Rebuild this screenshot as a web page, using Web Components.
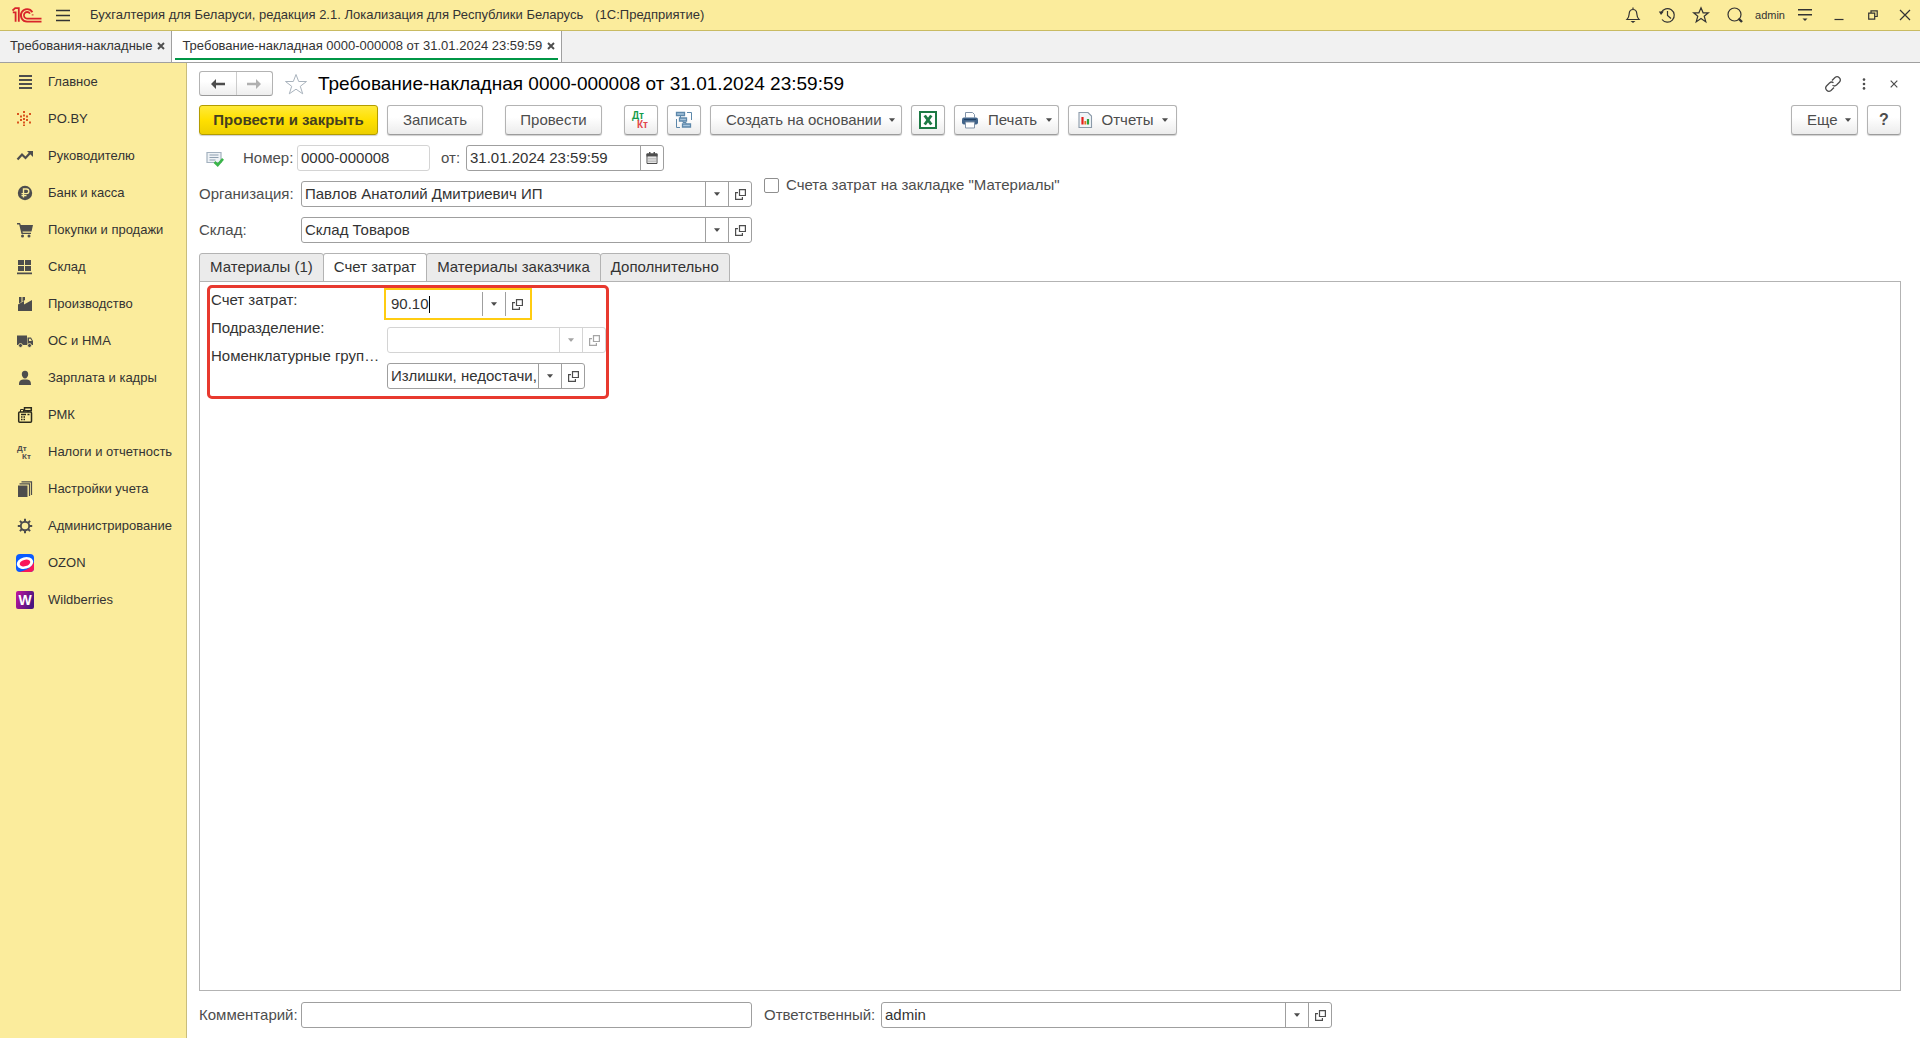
<!DOCTYPE html>
<html lang="ru">
<head>
<meta charset="utf-8">
<title>Требование-накладная 0000-000008 от 31.01.2024 23:59:59</title>
<style>
  html, body { margin: 0; }
  body {
    font-family: "Liberation Sans", Arial, sans-serif;
    font-size: 15px; line-height: 18px; color: #4d4d4d; background: #fff;
    --yellow: #fbec9c; --line: #b3b3b3; --field: #9f9f9f;
  }
</style>
</head>
<body>
<accounting-app></accounting-app>
<script>
const BASE = `
  *, *::before { box-sizing: border-box; }
  button, input { font: inherit; color: inherit; margin: 0; }
  button { background: none; border: 0; padding: 0; display: flex; align-items: center; justify-content: center; }
  input { min-width: 0; }
  a { color: inherit; text-decoration: none; }
`;
const FIELD = `
  .field { display: flex; height: 26px; border: 1px solid var(--field); border-radius: 3px; background: #fff; color: #333; }
  .field input { flex: 1; width: 0; border: 0; padding: 0 0 0 3px; background: transparent; outline: 0; }
  .field button { width: 23px; flex: none; border-left: 1px solid var(--field); }
`;
const ICONS = {
  logo: [30, 16, `<g fill="none" stroke="#d8242a" stroke-width="1.8"><path d="M.5 3.6 3.2 1.2h3.6v13.6M.8 5.4h2.8v9.4"/><path d="M20.4 5.2A6.2 6.2 0 1 0 15 14.6h14.5"/><path d="M18 6.6A3.3 3.3 0 1 0 15 11.6h14.5"/><path d="M20.6 7.4v1"/></g>`],
  menu: [16, 14, `<path d="M1 2.5h14M1 7.5h14M1 12.5h14" stroke="#333" stroke-width="1.3"/>`],
  bell: [16, 18, `<path d="M2 13.5h12c-2-2-2-3.500-2.200-6C11.600 5 10 3.500 8 3.500S4.400 5 4.200 7.500C4 10 4 11.500 2 13.500zM8 1.500v2" fill="none" stroke="#333" stroke-width="1.200"/><path d="M5.500 15h5L8 17z" fill="#333"/>`],
  history: [18, 18, `<g fill="none" stroke="#333" stroke-width="1.200"><path d="M3.300 6.500A6.800 6.800 0 1 1 4 13.500M9.500 5v4.500l3.500 3"/></g><path d="M.8 5.500h5L3 9z" fill="#333"/>`],
  star: [18, 18, `<path d="M9 1.800l2.100 5h5.300l-4.200 3.400 1.600 5.700L9 12.600l-4.800 3.300 1.600-5.700L1.600 6.800h5.300z" fill="none" stroke="#333" stroke-width="1.200"/>`],
  search: [18, 18, `<circle cx="8.500" cy="8.500" r="6.500" fill="none" stroke="#333" stroke-width="1.200"/><path d="M12.500 12.500l3.500 3.500" stroke="#333" stroke-width="2.400"/>`],
  usermenu: [16, 14, `<path d="M1 1.700h14M1 6.700h14" stroke="#333" stroke-width="1.400"/><path d="M5.500 10.500h5L8 13z" fill="#333"/>`],
  min: [10, 14, `<path d="M.5 11.500h9" stroke="#333" stroke-width="1.200"/>`],
  restore: [10, 10, `<path d="M.7 3.200h6v6h-6zM3 3V.8h6.200v5.700H7" fill="none" stroke="#333" stroke-width="1.200"/>`],
  close: [12, 12, `<path d="M1 1l10 10M11 1L1 11" stroke="#333" stroke-width="1.200"/>`],
  closesm: [8, 8, `<path d="M.7.7l6.600 6.600M7.300.7L.7 7.300" stroke="#4d4d4d" stroke-width="1.200"/>`],
  closetab: [8, 8, `<path d="M1 1l6 6M7 1L1 7" stroke="#4d4d4d" stroke-width="1.900"/>`],
  link: [18, 18, `<g fill="none" stroke="#4d4d4d" stroke-width="1.300"><path d="M8 5.500l3-3a3.200 3.200 0 0 1 4.500 4.500l-3 3a3.200 3.200 0 0 1-4 .3"/><path d="M10 12.500l-3 3A3.200 3.200 0 0 1 2.500 11l3-3a3.200 3.200 0 0 1 4-.3"/></g>`],
  dots: [4, 12, `<g fill="#4d4d4d"><circle cx="2" cy="1.600" r="1.300"/><circle cx="2" cy="6" r="1.300"/><circle cx="2" cy="10.400" r="1.300"/></g>`],
  back: [14, 10, `<path d="M0 5l5-5v3.800h9v2.400H5V10z" fill="#4d4d4d"/>`],
  fwd: [14, 10, `<path d="M14 5L9 0v3.800H0v2.400h9V10z" fill="#b0b0b0"/>`],
  bigstar: [24, 22, `<path d="M12 1.500l2.700 7H22.500l-6.200 4.800 2.400 7.500L12 16.200l-6.700 4.600 2.400-7.500L1.500 8.500h7.800z" fill="none" stroke="#a9b3bd" stroke-width="1"/>`],
  drop: [6, 4, `<path d="M0 .3h6L3.500 3.600h-1z" fill="#4d4d4d"/>`],
  open: [11, 11, `<path d="M4.500.6h5.900v5.900H4.500zM3 3.600H.6v6.800h6.800V8" fill="none" stroke="#4d4d4d" stroke-width="1.200"/>`],
  calendar: [12, 12, `<path d="M1 2h10v9.500H1z" fill="#fff" stroke="#4d4d4d"/><path d="M.5 1.500h11v3H.5zM3 0h1.500v2H3zM7.500 0H9v2H7.500z" fill="#4d4d4d"/><path d="M2.500 6.200h7M2.500 8h7M2.500 9.800h7" stroke="#4d4d4d" stroke-width="1" stroke-dasharray="1 1"/>`],
  doc: [18, 18, `<path d="M1 3.500h14v10H1z" fill="#eef2f6" stroke="#a3b1bf" stroke-width="1.200"/><path d="M3.500 6h9M3.500 8.500h9M3.500 11h6" stroke="#8fa0b0"/><path d="M8.500 13l3.200 3L17 9.800" fill="none" stroke="#3bb54a" stroke-width="2.600"/>`],
  dtkt: [20, 20, `<text x="1" y="9" font-size="10" font-weight="bold" fill="#159c4b">Дт</text><text x="6" y="18" font-size="10" font-weight="bold" fill="#e2474b">Кт</text>`],
  tree: [18, 18, `<g fill="#a9c6dd" stroke="#5d88ab" stroke-width="1.300"><path d="M1.500 1.500h8v3h-8zM4.500 7h7v3h-7zM7.500 13h8v3h-8z"/></g><path d="M5.500 4.500V7M8 10v1.500h3V13M12 1.500h4.500V9M1.500 8v8.500H5" fill="none" stroke="#5d88ab"/>`],
  excel: [18, 18, `<path d="M1 1h16v16H1z" fill="#fff" stroke="#1d7a45" stroke-width="2"/><path d="M5.700 4.500l6.600 9M12.300 4.500l-6.600 9" stroke="#1d7a45" stroke-width="2.900"/>`],
  print: [18, 18, `<path d="M4.500 6.500V1.500h7l2 2v3" fill="#fff" stroke="#8193a8"/><rect x="1" y="6.500" width="16" height="7" rx="2" fill="#41648a"/><path d="M3 8.500h12" stroke="#1f3f63"/><path d="M4.500 11h9v6h-9z" fill="#fff" stroke="#8193a8"/>`],
  report: [16, 18, `<path d="M2 1.500h9l3.500 3.500v11.500H2z" fill="#f1f5f8" stroke="#8b9aa9" stroke-width="1.100"/><path d="M5.500 6v7.500" stroke="#e4201c" stroke-width="2.200"/><path d="M8.300 10v3.500" stroke="#e4701c" stroke-width="1.800"/><path d="M11 8v5.500" stroke="#2aa23a" stroke-width="2.200"/>`],
  n_main: [18, 18, `<path d="M3 3h13M3 7h13M3 11h13M3 15h13" stroke="#4d4d4d" stroke-width="2"/>`],
  n_po: [18, 18, `<path d="M7 1h2v2H7zM7 4.500h2v2H7zM7 8h2v2H7zM7 11.500h2v2H7zM7 14.500h2V16H7zM1 3h2v2H1zM13 3h2v2h-2zM4 5.500h2v2H4zM10 5.500h2v2h-2zM4 9h2v2H4zM10 9h2v2h-2zM1 11.500h2v2H1zM13 11.500h2v2h-2z" fill="#d9541e"/>`],
  n_chart: [18, 18, `<path d="M1.500 12.500L6 7.500l3.500 3.500L15 5" fill="none" stroke="#4d4d4d" stroke-width="2.200"/><path d="M11 4h6v6z" fill="#4d4d4d"/>`],
  n_rub: [18, 18, `<circle cx="9" cy="9" r="7.200" fill="#4d4d4d"/><path d="M7.500 13.500V5h3a2.300 2.300 0 0 1 0 4.600H5.500M5.500 11.600h5" fill="none" stroke="#fbec9c" stroke-width="1.400"/>`],
  n_cart: [18, 18, `<path d="M1 2h3l.8 2H17l-1.500 6.500H6.500l.3 1.200H15V13H5.500L3.200 3.500H1z" fill="#4d4d4d"/><circle cx="6.500" cy="15" r="1.500" fill="#4d4d4d"/><circle cx="13" cy="15" r="1.500" fill="#4d4d4d"/>`],
  n_store: [18, 18, `<path d="M2 2h6v5H2zM9 2h6v5H9zM2 8h6v5H2zM9 8h6v5H9zM1 14.500h15v1.800H1z" fill="#4d4d4d"/>`],
  n_fact: [18, 18, `<path d="M2 16V9.500L8 6v3.500L16 5v11z" fill="#4d4d4d"/><path d="M3 2h2.500v5L3 8.500zM6.500 2H9v3L6.500 6.500z" fill="#4d4d4d"/>`],
  n_truck: [18, 18, `<path d="M1 3.500h10V13H1zM11.500 5.500H15L17 9v4h-5.500z" fill="#4d4d4d"/><path d="M13 6.800h1.500L15.800 9H13z" fill="#fbec9c"/><circle cx="4.500" cy="13.500" r="2" fill="#4d4d4d" stroke="#fbec9c" stroke-width=".8"/><circle cx="13.500" cy="13.500" r="2" fill="#4d4d4d" stroke="#fbec9c" stroke-width=".8"/>`],
  n_user: [18, 18, `<path d="M9 1.800c2.200 0 3.200 1.500 3.200 3.400S10.800 9.500 9 9.500 5.800 7.100 5.800 5.200 6.800 1.800 9 1.800zM3 16c0-4 1-5 4-5.500h4c3 .5 4 1.500 4 5.500z" fill="#4d4d4d"/>`],
  n_pos: [18, 18, `<g fill="none" stroke="#2b2a1c" stroke-width="1.500"><rect x="2.700" y="6" width="12.800" height="10.300" rx="1"/><path d="M8.500 1.700h6.800v3H8.500zM12 4.700V6" /></g><path d="M4.500 6V3.500h3V6" fill="none" stroke="#2b2a1c"/><path d="M5 8.500h5M5 11h1.500M7.500 11H9M5 13.500h1.500M7.500 13.500H9M11.500 8.500h2" stroke="#2b2a1c" stroke-width="1.400"/>`],
  n_dtkt: [18, 18, `<text x="1" y="8" font-size="8" font-weight="bold" fill="#4d4d4d">Дт</text><text x="6" y="16" font-size="8" font-weight="bold" fill="#4d4d4d">Кт</text>`],
  n_books: [18, 18, `<path d="M2 5.500h9.500V17H2z" fill="#4d4d4d"/><path d="M3.500 3.800h10V16M5.500 1.800h10V15" fill="none" stroke="#4d4d4d" stroke-width="1.200"/>`],
  n_gear: [18, 18, `<circle cx="9" cy="9" r="4.200" fill="none" stroke="#4d4d4d" stroke-width="1.900"/><path d="M9 1.800v3M9 13.200v3M1.800 9h3M13.200 9h3M3.900 3.900L6 6M12 12l2.100 2.100M14.100 3.900L12 6M6 12l-2.100 2.100" stroke="#4d4d4d" stroke-width="2"/>`],
  n_ozon: [18, 18, `<clipPath id="c"><rect width="18" height="18" rx="4"/></clipPath><g clip-path="url(#c)"><path d="M0 0h18v18H0z" fill="#0a5bff"/><path d="M3 18c6-1 12-4 15-10v10z" fill="#f9155b"/><g transform="rotate(-15 9 9)"><ellipse cx="9" cy="9" rx="8.300" ry="5.800" fill="#fff"/><ellipse cx="9" cy="9" rx="5.400" ry="3.200" fill="#f9155b"/></g></g>`],
  n_wb: [18, 18, `<defs><linearGradient id="g" x1="0" x2="1" y1="0" y2=".4"><stop stop-color="#c2159f"/><stop offset="1" stop-color="#4b1580"/></linearGradient></defs><rect width="18" height="18" rx="2" fill="url(#g)"/><text x="9" y="14" font-size="14" font-weight="bold" fill="#fff" text-anchor="middle">W</text>`],
};
const define = (name, css, html) => customElements.define(name, class extends HTMLElement {
  connectedCallback() {
    if (this.shadowRoot) return;
    const root = this.attachShadow({ mode: 'open' });
    root.innerHTML = `<style>${BASE}${css}</style>${typeof html === 'function' ? html(this) : html}`;
  }
});

define('app-icon', `:host { display: block; flex: none; } svg { display: block; }`, el => {
  const [w, h, body] = ICONS[el.getAttribute('name')];
  return `<svg width="${w}" height="${h}" viewBox="0 0 ${w} ${h}" aria-hidden="true">${body}</svg>`;
});

define('app-header', `
  :host { display: flex; align-items: center; height: 31px; padding-left: 12px; background: var(--yellow); border-bottom: 1px solid #c9bb62; font-size: 13px; color: #333; }
  .menu { margin: 0 19px 0 13px; }
  .prod { margin-left: 12px; }
  nav { display: flex; align-items: center; margin-left: auto; }
  nav button { width: 34px; height: 30px; }
  nav .user { width: 36px; font-size: 11px; }
  nav button:last-child { width: 30px; }
`, `
  <app-icon name="logo"></app-icon>
  <button class="menu" aria-label="Меню"><app-icon name="menu"></app-icon></button>
  <span>Бухгалтерия для Беларуси, редакция 2.1. Локализация для Республики Беларусь</span>
  <span class="prod">(1С:Предприятие)</span>
  <nav>
    <button aria-label="Уведомления"><app-icon name="bell"></app-icon></button>
    <button aria-label="История"><app-icon name="history"></app-icon></button>
    <button aria-label="Избранное"><app-icon name="star"></app-icon></button>
    <button aria-label="Поиск"><app-icon name="search"></app-icon></button>
    <button class="user">admin</button>
    <button aria-label="Настройки"><app-icon name="usermenu"></app-icon></button>
    <button aria-label="Свернуть"><app-icon name="min"></app-icon></button>
    <button aria-label="Восстановить"><app-icon name="restore"></app-icon></button>
    <button aria-label="Закрыть"><app-icon name="close"></app-icon></button>
  </nav>`);

define('window-tabs', `:host { display: flex; height: 32px; background: #f1f1f1; border-bottom: 1px solid #a0a0a0; }`, `<slot></slot>`);
define('window-tab', `
  :host { display: flex; padding: 0 3px; border-right: 1px solid #a0a0a0; font-size: 13px; color: #333; }
  :host([active]) { background: #fff; }
  div { display: flex; align-items: center; gap: 5px; padding: 1px 3px 0 7px; border-bottom: 2px solid transparent; border-top: 2px solid transparent; margin-bottom: 2px; }
  :host([active]) div { border-bottom-color: #009646; }
`, `<div><a href="#"><slot></slot></a><button aria-label="Закрыть вкладку"><app-icon name="closetab"></app-icon></button></div>`);

define('side-nav', `:host { display: block; width: 187px; flex: none; background: var(--yellow); border-right: 1px solid #c9bd7c; }`, `<nav><slot></slot></nav>`);
define('nav-item', `
  :host { display: block; font-size: 13px; color: #333; }
  a { display: flex; align-items: center; gap: 14px; height: 37px; padding: 1px 0 0 16px; white-space: nowrap; }
`, el => `<a href="#"><app-icon name="${el.getAttribute('icon')}"></app-icon><slot></slot></a>`);

define('tool-button', `
  :host { display: block; flex: none; }
  button { width: 100%; height: 30px; gap: 9px; padding: 0 8px; border: 1px solid #b3b3b3; border-bottom-color: #9c9c9c; border-radius: 3px; background: linear-gradient(#fff 40%, #ececec); box-shadow: 0 1px 1px #d0d0d0; white-space: nowrap; }
  :host([primary]) button { font-weight: bold; color: #443f20; border-color: #b39c00; background: linear-gradient(#ffea3a, #ffe000 50%, #edcf00); }
  :host([help]) button { font-weight: bold; font-size: 16px; }
  :host([wide]) button { justify-content: flex-start; padding-left: 15px; gap: 7px; }
`, el => `<button aria-label="${el.getAttribute('label') || el.textContent}">${el.hasAttribute('icon') ? `<app-icon name="${el.getAttribute('icon')}"></app-icon>` : ''}<slot></slot>${el.hasAttribute('menu') ? '<app-icon name="drop"></app-icon>' : ''}</button>`);

const refButtons = `<button aria-label="Выбрать"><app-icon name="drop"></app-icon></button><button aria-label="Открыть"><app-icon name="open"></app-icon></button>`;
define('form-field', FIELD + `
  :host { display: flex; align-items: center; }
  label { flex: none; width: var(--label, auto); }
  .field { width: var(--width, 451px); }
  :host([readonly]) .field { border-color: #d4d4d4; }
`, el => {
  const kind = el.getAttribute('kind');
  const tail = kind === 'ref' ? refButtons : kind === 'date' ? '<button aria-label="Календарь"><app-icon name="calendar"></app-icon></button>' : '';
  return `<label for="f">${el.getAttribute('label')}</label><div class="field"><input id="f" value="${el.getAttribute('value') || ''}"${el.hasAttribute('readonly') ? ' readonly' : ''}>${tail}</div>`;
});

define('check-field', `
  :host { display: flex; align-items: center; }
  label { display: flex; align-items: center; gap: 7px; line-height: 16px; }
  input { appearance: none; width: 15px; height: 15px; border: 1px solid #8f8f8f; border-radius: 2px; background: #fff; }
`, `<label><input type="checkbox"><slot></slot></label>`);

define('page-tabs', `
  :host { display: flex; flex-direction: column; flex: 1; }
  .tabs { display: flex; margin-bottom: -1px; color: #333; }
  .tabs button { height: 29px; padding: 0 10px 2px; border: 1px solid var(--line); margin-right: -1px; background: #ebebeb; border-radius: 3px 3px 0 0; }
  .tabs button[aria-selected=true] { background: #fff; border-bottom-color: #fff; }
  .panel { flex: 1; border: 1px solid var(--line); padding: 3px 7px; }
`, `<div class="tabs" role="tablist">
  <button role="tab">Материалы (1)</button><button role="tab" aria-selected="true">Счет затрат</button><button role="tab">Материалы заказчика</button><button role="tab">Дополнительно</button>
  </div><div class="panel" role="tabpanel"><slot></slot></div>`);

define('cost-group', FIELD + `
  :host { display: flex; width: 402px; border: 3px solid #e8392f; border-radius: 5px; color: #333; }
  .labels { display: flex; flex-direction: column; width: 177px; padding-left: 1px; flex: none; }
  .labels label { height: 28px; line-height: 24px; white-space: nowrap; }
  .fields { display: flex; flex-direction: column; gap: 10px; padding: 3px 0 7px; flex: 1; }
  .field.account { width: 142px; border-color: transparent; border-radius: 0; outline: 2px solid #fc1; outline-offset: 1px; }
  .account input { background: linear-gradient(#000, #000) 41px center / 1px 17px no-repeat; }
  .dept { border-color: #d4d4d4; }
  .dept button { border-color: #d4d4d4; }
  .dept app-icon { opacity: .5; }
  .group { width: 198px; }
`, `<div class="labels"><label for="a">Счет затрат:</label><label for="d">Подразделение:</label><label for="g">Номенклатурные груп…</label></div>
  <div class="fields">
    <div class="field account"><input id="a" value="90.10">${refButtons}</div>
    <div class="field dept"><input id="d" readonly>${refButtons}</div>
    <div class="field group"><input id="g" value="Излишки, недостачи,">${refButtons}</div>
  </div>`);

define('document-form', `
  :host { display: flex; flex-direction: column; flex: 1; min-width: 0; padding: 8px 19px 10px 12px; }
  .title { display: flex; align-items: center; height: 25px; }
  .hist { display: flex; width: 74px; height: 25px; border: 1px solid #b3b3b3; border-bottom-color: #999; border-radius: 3px; background: linear-gradient(#fff 40%, #eee); }
  .hist button { flex: 1; } .hist button + button { border-left: 1px solid #ccc; }
  .fav { margin: 0 10px 0 11px; }
  h1 { margin: 0; font-size: 19px; line-height: 24px; font-weight: normal; color: #000; }
  .right { display: flex; align-items: center; margin-left: auto; gap: 20px; padding-right: 3px; }
  .right button:last-child { margin-left: 4px; }
  .bar { display: flex; gap: 9px; margin-top: 9px; }
  .gap { margin-left: 13px; } .push { margin-left: auto; }
  .num { display: flex; align-items: center; gap: 11px; margin-top: 10px; padding-left: 7px; }
  .num form-field:first-of-type { --label: 54px; --width: 133px; margin-left: 8px; }
  .num form-field:last-of-type { --label: 25px; --width: 198px; }
  .heads { display: flex; gap: 12px; margin-top: 6px; }
  .col { display: flex; flex-direction: column; gap: 10px; padding-top: 4px; --label: 102px; }
  .heads check-field { align-self: flex-start; }
  page-tabs { margin-top: 10px; }
  .foot { display: flex; gap: 12px; margin-top: 11px; --label: 102px; }
  .foot form-field:last-child { --label: 117px; }
`, `
  <div class="title">
    <div class="hist"><button aria-label="Назад"><app-icon name="back"></app-icon></button><button aria-label="Вперед"><app-icon name="fwd"></app-icon></button></div>
    <button class="fav" aria-label="В избранное"><app-icon name="bigstar"></app-icon></button>
    <h1>Требование-накладная 0000-000008 от 31.01.2024 23:59:59</h1>
    <div class="right"><button aria-label="Ссылка"><app-icon name="link"></app-icon></button><button aria-label="Еще действия"><app-icon name="dots"></app-icon></button><button aria-label="Закрыть"><app-icon name="closesm"></app-icon></button></div>
  </div>
  <div class="bar">
    <tool-button primary style="width:179px">Провести и закрыть</tool-button>
    <tool-button style="width:96px">Записать</tool-button>
    <tool-button class="gap" style="width:97px">Провести</tool-button>
    <tool-button class="gap" style="width:34px" icon="dtkt" label="Дт Кт"></tool-button>
    <tool-button style="width:34px" icon="tree" label="Структура подчиненности"></tool-button>
    <tool-button style="width:192px" wide menu>Создать на основании</tool-button>
    <tool-button style="width:34px" icon="excel" label="Excel"></tool-button>
    <tool-button style="width:105px" icon="print" menu>Печать</tool-button>
    <tool-button style="width:109px" icon="report" menu>Отчеты</tool-button>
    <tool-button class="push" style="width:67px" wide menu>Еще</tool-button>
    <tool-button style="width:34px" help>?</tool-button>
  </div>
  <div class="num">
    <app-icon name="doc"></app-icon>
    <form-field label="Номер:" value="0000-000008" readonly></form-field>
    <form-field label="от:" value="31.01.2024 23:59:59" kind="date"></form-field>
  </div>
  <div class="heads">
    <div class="col">
      <form-field label="Организация:" value="Павлов Анатолий Дмитриевич ИП" kind="ref"></form-field>
      <form-field label="Склад:" value="Склад Товаров" kind="ref"></form-field>
    </div>
    <check-field>Счета затрат на закладке "Материалы"</check-field>
  </div>
  <page-tabs><cost-group></cost-group></page-tabs>
  <div class="foot">
    <form-field label="Комментарий:"></form-field>
    <form-field label="Ответственный:" value="admin" kind="ref"></form-field>
  </div>`);

define('accounting-app', `
  :host { display: flex; flex-direction: column; min-height: 100vh; }
  main { display: flex; flex: 1; }
`, `
  <app-header></app-header>
  <window-tabs><window-tab>Требования-накладные</window-tab><window-tab active>Требование-накладная 0000-000008 от 31.01.2024 23:59:59</window-tab></window-tabs>
  <main>
    <side-nav>
      <nav-item icon="n_main">Главное</nav-item>
      <nav-item icon="n_po">PO.BY</nav-item>
      <nav-item icon="n_chart">Руководителю</nav-item>
      <nav-item icon="n_rub">Банк и касса</nav-item>
      <nav-item icon="n_cart">Покупки и продажи</nav-item>
      <nav-item icon="n_store">Склад</nav-item>
      <nav-item icon="n_fact">Производство</nav-item>
      <nav-item icon="n_truck">ОС и НМА</nav-item>
      <nav-item icon="n_user">Зарплата и кадры</nav-item>
      <nav-item icon="n_pos">РМК</nav-item>
      <nav-item icon="n_dtkt">Налоги и отчетность</nav-item>
      <nav-item icon="n_books">Настройки учета</nav-item>
      <nav-item icon="n_gear">Администрирование</nav-item>
      <nav-item icon="n_ozon">OZON</nav-item>
      <nav-item icon="n_wb">Wildberries</nav-item>
    </side-nav>
    <document-form></document-form>
  </main>`);
</script>
</body>
</html>
